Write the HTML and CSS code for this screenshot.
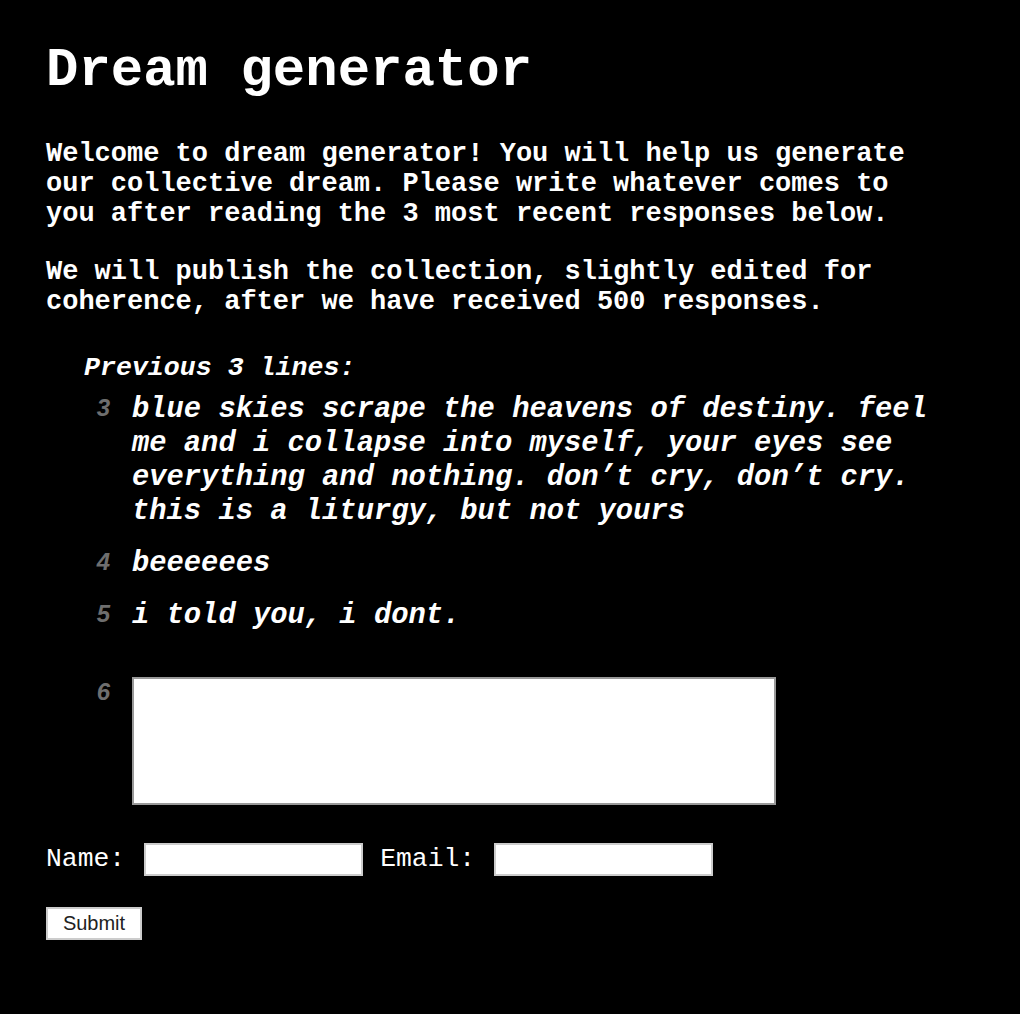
FILE: index.html
```html
<!DOCTYPE html>
<html>
<head>
<meta charset="utf-8">
<link rel="stylesheet" href="styles.css">
</head>
<body>
<main class="page">
  <h1 class="title">Dream generator</h1>
  <p class="intro">Welcome to dream generator! You will help us generate our collective dream. Please write whatever comes to you after reading the 3 most recent responses below.</p>
  <p class="intro">We will publish the collection, slightly edited for coherence, after we have received 500 responses.</p>
  <section class="previous">
    <div class="prev-label">Previous 3 lines:</div>
    <ol class="lines">
      <li class="line"><span class="num">3</span><span class="text">blue skies scrape the heavens of destiny. feel me and i collapse into myself, your eyes see everything and nothing. don’t cry, don’t cry. this is a liturgy, but not yours</span></li>
      <li class="line"><span class="num">4</span><span class="text">beeeeees</span></li>
      <li class="line"><span class="num">5</span><span class="text">i told you, i dont.</span></li>
    </ol>
    <div class="line new-line"><span class="num">6</span><textarea class="answer"></textarea></div>
  </section>
  <form class="form">
    <div class="fields">
      <label class="label">Name:</label><input class="field" type="text">
      <label class="label">Email:</label><input class="field" type="text">
    </div>
    <button class="submit" type="button">Submit</button>
  </form>
</main>
</body>
</html>
```
FILE: styles.css
```css
html, body {
  margin: 0;
  padding: 0;
  background: #000;
  color: #fff;
}
.page {
  padding: 40px 46px;
  font-family: "Liberation Mono", "Courier New", monospace;
  font-weight: bold;
  font-size: 27px;
}
.title {
  margin: 0 0 38px;
  font-size: 54px;
  line-height: 61px;
  font-weight: bold;
}
.intro {
  margin: 0 0 28px;
  line-height: 30px;
  width: 880px;
}
.previous {
  margin-top: 36px;
  padding-left: 38px;
}
.prev-label {
  font-style: italic;
  font-size: 26.6px;
  line-height: 30px;
  margin-bottom: 10px;
}
.lines {
  list-style: none;
  margin: 0;
  padding: 0;
}
.line {
  display: grid;
  grid-template-columns: 26px 1fr;
  column-gap: 22px;
  margin-bottom: 18px;
  align-items: start;
}
.line:last-child {
  margin-bottom: 0;
}
.num {
  text-align: right;
  font-family: "Liberation Sans", Arial, sans-serif;
  font-style: italic;
  font-weight: bold;
  font-size: 24px;
  line-height: 30px;
  color: #6e6e6e;
}
.text {
  font-style: italic;
  font-size: 28.8px;
  line-height: 34px;
  max-width: 820px;
}
.new-line {
  margin-top: 44px;
  margin-bottom: 0;
}
.new-line .num {
  line-height: 30px;
}
.answer {
  display: block;
  box-sizing: border-box;
  width: 644px;
  height: 128px;
  border: 2px solid #999;
  background: #fff;
  resize: none;
  margin: 0;
}
.form {
  margin-top: 38px;
}
.fields {
  display: flex;
  align-items: center;
  height: 32px;
}
.label {
  font-family: "Liberation Mono", "Courier New", monospace;
  font-weight: normal;
  font-size: 26.4px;
  margin-right: 19px;
}
.field {
  box-sizing: border-box;
  width: 219px;
  height: 33px;
  border: 2px solid #ccc;
  background: #fff;
  margin: 0 17px 0 0;
  padding: 0;
}
.submit {
  display: block;
  margin-top: 32px;
  box-sizing: border-box;
  width: 96px;
  height: 33px;
  background: #fff;
  border: 2px solid #ccc;
  border-radius: 0;
  color: #222;
  font-family: "Liberation Sans", Arial, sans-serif;
  font-size: 20px;
  padding: 0;
}
```
